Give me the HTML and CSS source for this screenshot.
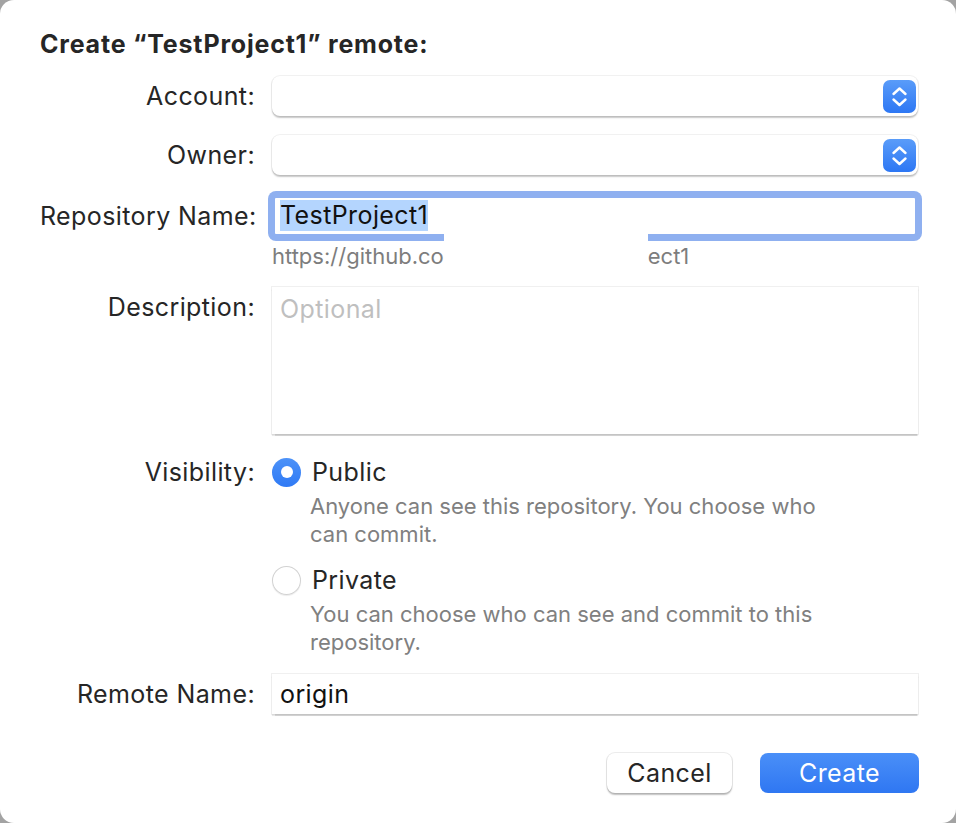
FILE: index.html
```html
<!DOCTYPE html>
<html lang="en">
<head>
<meta charset="utf-8">
<title>Create remote</title>
<link rel="stylesheet" href="styles.css">
</head>
<body>
<div class="dialog">
  <h1 class="title">Create “TestProject1” remote:</h1>
  <div class="form">
    <div class="row row-account">
      <div class="label">Account:</div>
      <div class="popup">
        <span class="stepper">
          <svg viewBox="0 0 33 33" width="33" height="33"><path d="M10.5 14 L16.5 8.5 L22.5 14 M10.5 19.5 L16.5 25 L22.5 19.5" fill="none" stroke="#fff" stroke-width="2.4" stroke-linecap="round" stroke-linejoin="round"/></svg>
        </span>
      </div>
    </div>
    <div class="row row-owner">
      <div class="label">Owner:</div>
      <div class="popup">
        <span class="stepper">
          <svg viewBox="0 0 33 33" width="33" height="33"><path d="M10.5 14 L16.5 8.5 L22.5 14 M10.5 19.5 L16.5 25 L22.5 19.5" fill="none" stroke="#fff" stroke-width="2.4" stroke-linecap="round" stroke-linejoin="round"/></svg>
        </span>
      </div>
    </div>
    <div class="row row-repo">
      <div class="label">Repository Name:</div>
      <div class="textfield focused"><span class="selected">TestProject1</span></div>
    </div>
    <div class="row row-url">
      <div class="label"></div>
      <div class="url">https://github.co<span class="redact"></span>ect1</div>
    </div>
    <div class="row row-desc">
      <div class="label label-top">Description:</div>
      <div class="textarea"><span class="placeholder">Optional</span></div>
    </div>
    <div class="row row-vis">
      <div class="label label-top">Visibility:</div>
      <div class="options">
        <div class="option">
          <span class="radio checked"></span>
          <span class="option-name">Public</span>
        </div>
        <p class="option-desc">Anyone can see this repository. You choose who can commit.</p>
        <div class="option option-private">
          <span class="radio"></span>
          <span class="option-name">Private</span>
        </div>
        <p class="option-desc">You can choose who can see and commit to this repository.</p>
      </div>
    </div>
    <div class="row row-remote">
      <div class="label">Remote Name:</div>
      <div class="textfield plain">origin</div>
    </div>
  </div>
  <div class="buttons">
    <button class="btn btn-cancel">Cancel</button>
    <button class="btn btn-create">Create</button>
  </div>
</div>
</body>
</html>
```
FILE: styles.css
```css
* { box-sizing: border-box; }

html, body {
  margin: 0;
  padding: 0;
  height: 100%;
}

body {
  background: #a3a3a3;
  font-family: Inter, "Noto Sans", "Liberation Sans", sans-serif;
  color: #262626;
  overflow: hidden;
  letter-spacing: 0.4px;
}

.dialog {
  background: #ffffff;
  height: 823px;
  border-radius: 14px;
  padding: 29px 38px 0 40px;
}

.title {
  margin: 0;
  font-size: 25px;
  line-height: 30px;
  font-weight: 700;
  letter-spacing: 0.8px;
  color: #262626;
}

.form {
  margin-top: 17px;
  display: flex;
  flex-direction: column;
}

.row {
  display: flex;
  align-items: center;
  gap: 17px;
}

.label {
  width: 215px;
  flex: none;
  text-align: right;
  white-space: nowrap;
  font-size: 25px;
  line-height: 40px;
  color: #262626;
}

.label-top { align-self: flex-start; }

.popup {
  flex: 1;
  height: 40px;
  background: #fff;
  border-radius: 8px;
  box-shadow: 0 0 0 1px rgba(0, 0, 0, 0.05), 0 1.5px 1.5px rgba(0, 0, 0, 0.22);
  display: flex;
  justify-content: flex-end;
  align-items: center;
  padding-right: 2px;
}

.row-owner { margin-top: 19px; }

.stepper {
  width: 33px;
  height: 33px;
  border-radius: 7px;
  background: linear-gradient(#5a9cf9, #2d77f4);
  display: flex;
}

.row-repo { margin-top: 20px; }

.textfield {
  flex: 1;
  height: 40px;
  background: #fff;
  font-size: 25px;
  line-height: 34px;
  color: #111;
}

.textfield.focused {
  height: 42px;
  border: 3px solid #8fb0f0;
  border-radius: 4px;
  box-shadow: 0 0 0 4px #8fb0f0;
  padding-left: 5px;
  line-height: 34px;
}

.selected {
  background: #b4d5fe;
  display: inline-block;
  line-height: 31px;
  margin-top: 2px;
}

.row-url { margin-top: 7px; }

.url {
  font-size: 22px;
  line-height: 24px;
  color: #7d7d7d;
  white-space: nowrap;
  display: flex;
  letter-spacing: 0;
}

.redact {
  display: inline-block;
  width: 204px;
  height: 24px;
  position: relative;
}

.redact::before {
  content: "";
  position: absolute;
  left: 0;
  right: 0;
  top: -12px;
  bottom: 0;
  background: #fff;
}

.row-desc { margin-top: 19px; align-items: flex-start; }

.textarea {
  flex: 1;
  height: 147px;
  background: #fff;
  box-shadow: 0 0 0 1px rgba(0, 0, 0, 0.06), 0 1.5px 1px rgba(0, 0, 0, 0.18);
  padding: 7px 8px;
}

.placeholder {
  font-size: 25px;
  line-height: 30px;
  color: #bfbfbf;
}

.row-vis { margin-top: 23px; align-items: flex-start; }

.row-vis .label { line-height: 30px; }

.options {
  flex: 1;
  display: flex;
  flex-direction: column;
}

.option {
  display: flex;
  align-items: center;
  gap: 11px;
  height: 30px;
}

.option-private { margin-top: 17px; }

.radio {
  width: 29px;
  height: 29px;
  border-radius: 50%;
  background: #fff;
  box-shadow: inset 0 0 0 1px #d2d2d2, 0 1px 1px rgba(0, 0, 0, 0.08);
  flex: none;
  display: flex;
  align-items: center;
  justify-content: center;
}

.radio.checked {
  background: linear-gradient(#4d92f8, #2f7af5);
  box-shadow: none;
}

.radio.checked::after {
  content: "";
  width: 12px;
  height: 12px;
  border-radius: 50%;
  background: #fff;
}

.option-name {
  font-size: 25px;
  line-height: 30px;
  color: #262626;
}

.option-desc {
  margin: 5px 0 0 38px;
  width: 520px;
  font-size: 22px;
  line-height: 28px;
  letter-spacing: 0;
  color: #808080;
}

.row-remote { margin-top: 18px; }

.textfield.plain {
  height: 40px;
  box-shadow: 0 0 0 1px rgba(0, 0, 0, 0.06), 0 1.5px 1px rgba(0, 0, 0, 0.18);
  padding-left: 8px;
  line-height: 40px;
}

.buttons {
  margin-top: 39px;
  display: flex;
  justify-content: flex-end;
  gap: 28px;
  margin-right: -1px;
}

.btn {
  height: 40px;
  border: none;
  border-radius: 8px;
  font-family: Inter, "Noto Sans", "Liberation Sans", sans-serif;
  font-size: 25px;
  letter-spacing: 0.4px;
  padding: 0;
}

.btn-cancel {
  width: 125px;
  background: #fff;
  color: #262626;
  box-shadow: 0 0 0 1px rgba(0, 0, 0, 0.07), 0 1.5px 1.5px rgba(0, 0, 0, 0.25);
}

.btn-create {
  width: 159px;
  background: linear-gradient(#4a8ff8, #2f77f2);
  color: #fff;
}
```
